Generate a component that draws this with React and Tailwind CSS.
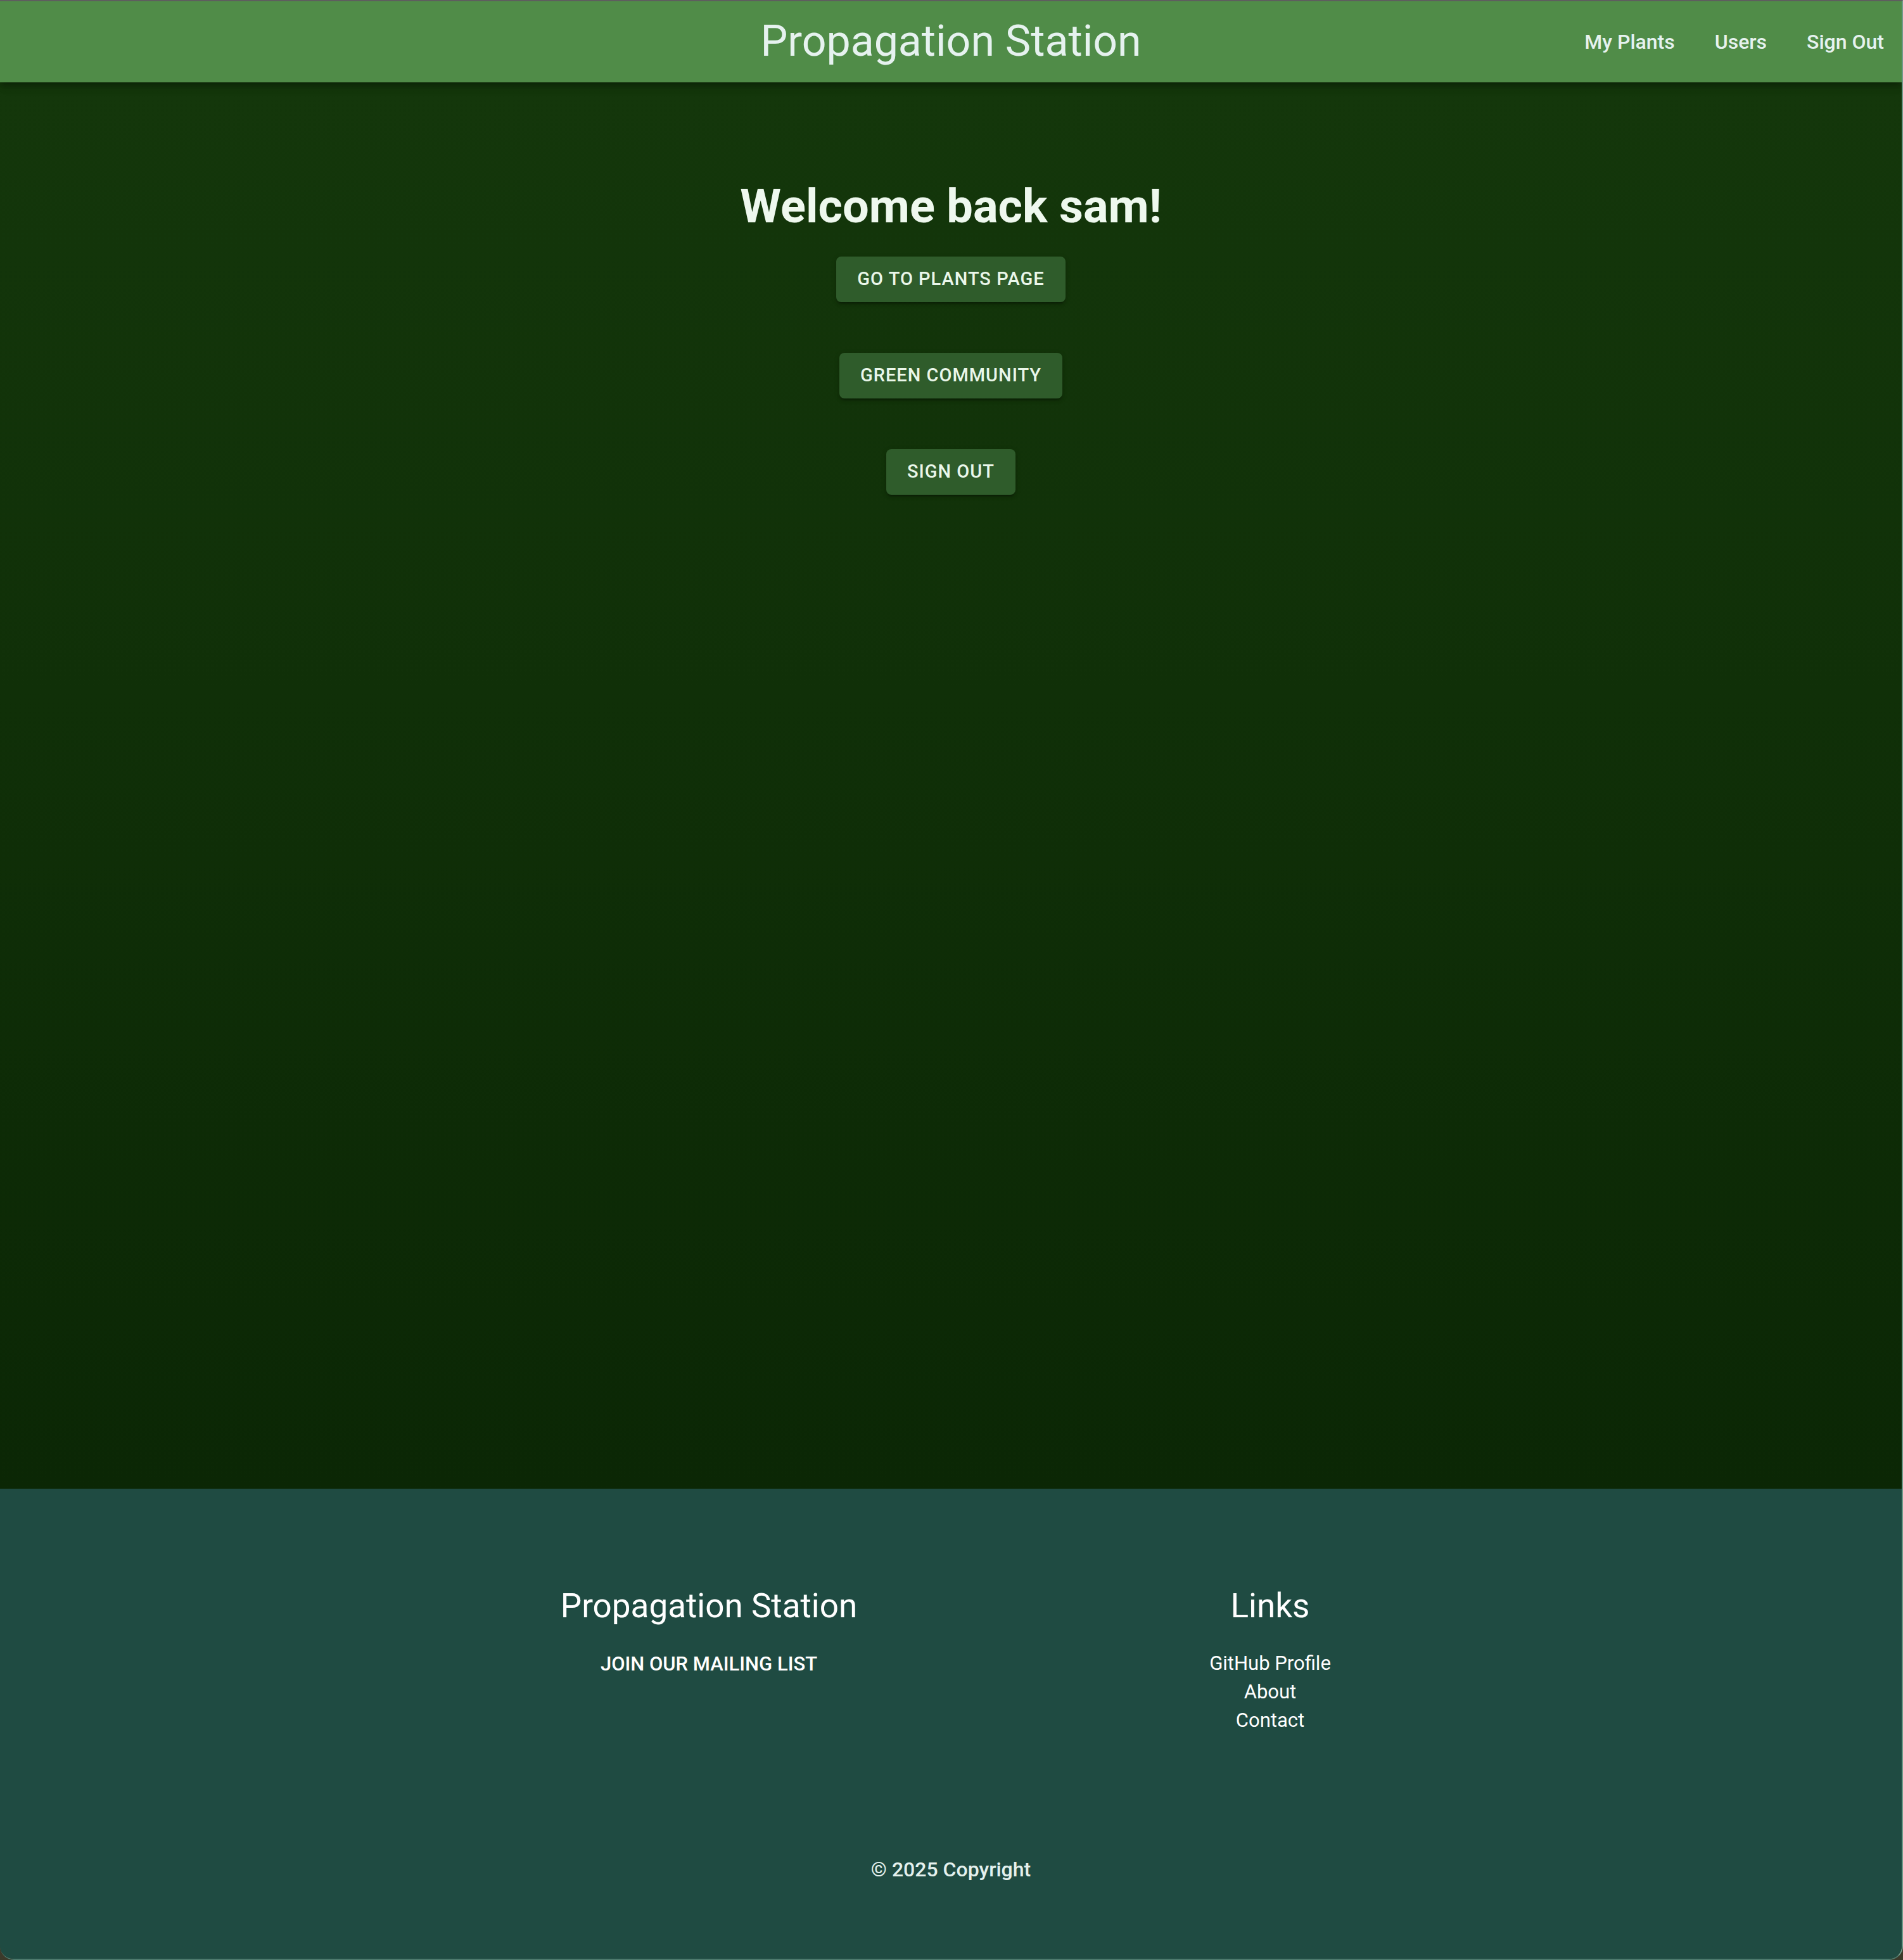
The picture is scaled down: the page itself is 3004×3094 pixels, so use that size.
import React from "react";

const font = "font-['Roboto','Liberation_Sans',sans-serif]";

function NavLink({ children }) {
  return <a className="text-[32px] font-medium leading-none text-[#e6f2ef]">{children}</a>;
}

function ActionButton({ children }) {
  return (
    <button className="flex h-[72px] items-center rounded-[8px] bg-[#2f5c2b] px-[33px] text-[29px] font-medium uppercase tracking-[1px] text-[#eaf7ea] shadow-[0_6px_2px_-4px_rgba(0,0,0,0.2),0_4px_4px_0_rgba(0,0,0,0.14),0_2px_10px_0_rgba(0,0,0,0.12)]">
      {children}
    </button>
  );
}

export default function App() {
  return (
    <div className={`${font} h-[3094px] w-[3004px] bg-[#3c3a2a]`}>
      <div className="flex h-full flex-col overflow-hidden rounded-b-[22px] border-t-2 border-r-2 border-b-2 border-t-[#5e5e5e] border-r-[#6f9a8a] border-b-[#4d7a6d]">
        <header className="relative z-10 grid h-[128px] shrink-0 grid-cols-[1fr_auto_1fr] items-center bg-[#508c48] shadow-[0_4px_8px_-2px_rgba(0,0,0,0.2),0_8px_10px_0_rgba(0,0,0,0.14),0_2px_20px_0_rgba(0,0,0,0.12)]">
          <div />
          <h1 className="text-[68px] font-normal leading-[1.2] text-[#e6f2ef]">Propagation Station</h1>
          <nav className="flex items-center justify-self-end gap-[63px] pr-[28px]">
            <NavLink>My Plants</NavLink>
            <NavLink>Users</NavLink>
            <NavLink>Sign Out</NavLink>
          </nav>
        </header>

        <main className="flex h-[2220px] shrink-0 flex-col items-center bg-linear-to-b from-[#14370b] to-[#0b2705] pt-[152px]">
          <h2 className="text-[74px] font-bold leading-[1.2] text-[#eef8ee]">Welcome back sam!</h2>
          <div className="mt-[34px] flex flex-col items-center gap-[80px]">
            <ActionButton>Go to plants page</ActionButton>
            <ActionButton>Green community</ActionButton>
            <ActionButton>Sign out</ActionButton>
          </div>
        </main>

        <footer className="flex flex-1 flex-col items-center bg-[#1f4b42] pt-[154px] text-white">
          <div className="flex w-full justify-center">
            <div className="flex w-[1008px] flex-col items-center">
              <h3 className="text-[53px] font-normal leading-[1.2]">Propagation Station</h3>
              <p className="mt-[36px] text-[31px] font-medium uppercase leading-[1.5]">Join our mailing list</p>
            </div>
            <div className="flex w-[764px] flex-col items-center">
              <h3 className="text-[53px] font-normal leading-[1.2]">Links</h3>
              <ul className="mt-[35px] flex flex-col items-center text-[31px] leading-[45px]">
                <li>GitHub Profile</li>
                <li>About</li>
                <li>Contact</li>
              </ul>
            </div>
          </div>
          <p className="mt-[189px] text-[32px] font-medium leading-[1.5] text-[#e4f1ee]">© 2025 Copyright</p>
        </footer>
      </div>
    </div>
  );
}
